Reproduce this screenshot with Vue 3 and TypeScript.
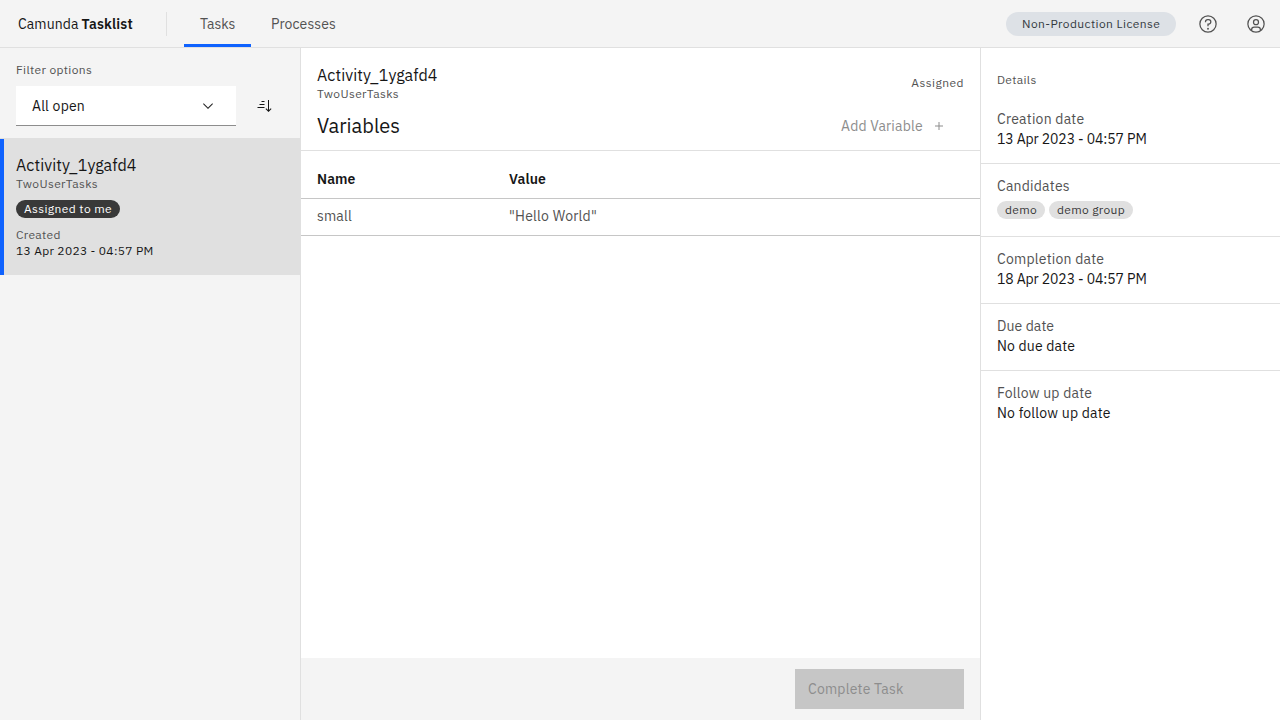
<script setup lang="ts">
interface Detail {
  label: string
  value?: string
  tags?: string[]
  kind: string
}

const details: Detail[] = [
  { label: 'Creation date', value: '13 Apr 2023 - 04:57 PM', kind: 'creation' },
  { label: 'Candidates', tags: ['demo', 'demo group'], kind: 'candidates' },
  { label: 'Completion date', value: '18 Apr 2023 - 04:57 PM', kind: 'completion' },
  { label: 'Due date', value: 'No due date', kind: 'due' },
  { label: 'Follow up date', value: 'No follow up date', kind: 'follow' },
]

const variables = [{ name: 'small', value: '"Hello World"' }]
</script>

<template>
  <div class="app">
    <header class="header">
      <div class="brand"><span>Camunda</span><b>Tasklist</b></div>
      <nav class="nav">
        <a class="nav-item tasks active">Tasks</a>
        <a class="nav-item processes">Processes</a>
      </nav>
      <span class="license">Non-Production License</span>
      <div class="actions">
        <svg class="icon" viewBox="0 0 32 32" width="20" height="20">
          <path d="M16 2a14 14 0 1 0 14 14A14 14 0 0 0 16 2Zm0 26a12 12 0 1 1 12-12A12 12 0 0 1 16 28Z" />
          <circle cx="16" cy="23.5" r="1.5" />
          <path d="M17 8h-1.5A4.49 4.49 0 0 0 11 12.5V13h2v-.5A2.5 2.5 0 0 1 15.5 10H17a2.5 2.5 0 0 1 0 5h-2v4.5h2V17a4.5 4.5 0 0 0 0-9Z" />
        </svg>
        <svg class="icon" viewBox="0 0 32 32" width="20" height="20">
          <path d="M16 8a5 5 0 1 0 5 5 5 5 0 0 0-5-5Zm0 8a3 3 0 1 1 3-3 3 3 0 0 1-3 3Z" />
          <path d="M16 2a14 14 0 1 0 14 14A14.02 14.02 0 0 0 16 2Zm-6 24.38V25a3 3 0 0 1 3-3h6a3 3 0 0 1 3 3v1.38a11.9 11.9 0 0 1-12 0Zm13.99-1.45A5 5 0 0 0 19 20h-6a5 5 0 0 0-4.99 4.93 12 12 0 1 1 15.98 0Z" />
        </svg>
      </div>
    </header>

    <div class="body">
      <aside class="task-panel">
        <section class="filters">
          <label class="filter-label">Filter options</label>
          <div class="filter-row">
            <div class="select">
              <span>All open</span>
              <svg viewBox="0 0 16 16" width="16" height="16"><path d="m8 11-5-5 .7-.7L8 9.6l4.3-4.3.7.7z" /></svg>
            </div>
            <svg class="sort" viewBox="0 0 32 32" width="16" height="16">
              <path d="m27.6 20.6-3.6 3.6V4h-2v20.2l-3.6-3.6L17 22l6 6 6-6zM9 6h6v2H9zM5 12h10v2H5zM1 18h14v2H1z" />
            </svg>
          </div>
        </section>
        <article class="task">
          <div class="title">Activity_1ygafd4</div>
          <div class="process">TwoUserTasks</div>
          <span class="tag dark">Assigned to me</span>
          <div class="created">Created</div>
          <div class="created-date">13 Apr 2023 - 04:57 PM</div>
        </article>
      </aside>

      <main class="main">
        <div class="task-header">
          <div>
            <div class="title">Activity_1ygafd4</div>
            <div class="process">TwoUserTasks</div>
          </div>
          <span class="assigned">Assigned</span>
        </div>
        <div class="variables-header">
          <h1>Variables</h1>
          <div class="add">
            <span>Add Variable</span>
            <svg viewBox="0 0 32 32" width="16" height="16"><path d="M17 15V8h-2v7H8v2h7v7h2v-7h7v-2z" /></svg>
          </div>
        </div>
        <div class="row head"><span class="name">Name</span><span class="value">Value</span></div>
        <div v-for="v in variables" :key="v.name" class="row">
          <span class="name">{{ v.name }}</span><span class="value">{{ v.value }}</span>
        </div>
        <footer class="footer"><button disabled>Complete Task</button></footer>
      </main>

      <aside class="details">
        <div class="details-title">Details</div>
        <section v-for="d in details" :key="d.label" class="detail" :class="d.kind">
          <div class="label">{{ d.label }}</div>
          <div v-if="d.value" class="text">{{ d.value }}</div>
          <div v-else class="tags">
            <span v-for="t in d.tags" :key="t" class="tag">{{ t }}</span>
          </div>
        </section>
      </aside>
    </div>
  </div>
</template>

<style>
body { margin: 0; overflow: hidden; }
</style>

<style scoped>
.app {
  width: 1280px;
  height: 720px;
  display: flex;
  flex-direction: column;
  font-family: "IBM Plex Sans", Roboto, "Liberation Sans", sans-serif;
  font-size: 14px;
  line-height: 20px;
  letter-spacing: 0.16px;
  color: #161616;
  background: #fff;
  white-space: nowrap;
}
.app * { box-sizing: border-box; }
.header {
  height: 48px;
  flex: none;
  display: flex;
  align-items: center;
  background: #f4f4f4;
  border-bottom: 1px solid #e0e0e0;
}
.brand {
  width: 167px;
  height: 24px;
  padding-left: 18px;
  display: flex;
  gap: 3px;
  line-height: 24px;
  border-right: 1px solid #e0e0e0;
  letter-spacing: 0.1px;
}
.brand b { font-weight: 600; letter-spacing: 0.16px; }
.nav { display: flex; height: 47px; padding-left: 17px; gap: 4px; }
.nav-item {
  height: 47px;
  padding: 0 16px;
  line-height: 48px;
  letter-spacing: 0;
  color: #525252;
  border-bottom: 3px solid transparent;
}
.tasks { width: 67px; }
.processes { letter-spacing: 0.1px; }
.active { border-bottom-color: #0f62fe; }
.license {
  width: 170px;
  height: 24px;
  margin-left: auto;
  border-radius: 12px;
  padding-left: 16px;
  background: #dde1e6;
  color: #343a3f;
  font-size: 12px;
  line-height: 24px;
  letter-spacing: 0.41px;
}
.actions { display: flex; gap: 28px; padding: 0 14px 0 22px; }
.icon { display: block; fill: #525252; }
.body { flex: 1; min-height: 0; display: flex; }
.task-panel { width: 301px; flex: none; background: #f4f4f4; border-right: 1px solid #e0e0e0; }
.filters { height: 91px; padding: 14px 16px 0; border-bottom: 1px solid #e0e0e0; }
.filter-label {
  display: block;
  height: 24px;
  font-size: 12px;
  line-height: 16px;
  color: #525252;
  letter-spacing: 0.36px;
}
.filter-row { display: flex; align-items: center; }
.select {
  width: 220px;
  height: 40px;
  padding: 0 20px 0 16px;
  display: flex;
  align-items: center;
  justify-content: space-between;
  background: #fff;
  border-bottom: 1px solid #8d8d8d;
  letter-spacing: 0.2px;
}
.select svg { fill: #262626; }
.sort { margin-left: 20.5px; fill: #161616; }
.task { height: 136px; padding: 16px 12px; background: #e0e0e0; border-left: 4px solid #0f62fe; }
.title { font-size: 16px; line-height: 20px; letter-spacing: 0.08px; }
.process { margin-top: 1px; font-size: 12px; line-height: 16px; color: #525252; letter-spacing: 0.38px; }
.tag {
  display: block;
  height: 18px;
  padding: 0 8px;
  border-radius: 9px;
  background: #e0e0e0;
  color: #393939;
  font-size: 12px;
  line-height: 18px;
  letter-spacing: 0.32px;
}
.dark { width: 104px; margin-top: 8px; background: #393939; color: #fff; letter-spacing: 0.39px; }
.created, .created-date { font-size: 12px; line-height: 16px; letter-spacing: 0.32px; }
.created { margin-top: 9px; color: #525252; }
.main { width: 680px; flex: none; display: flex; flex-direction: column; border-right: 1px solid #e0e0e0; }
.task-header { height: 54px; padding: 17px 16px 0; display: flex; justify-content: space-between; }
.assigned { margin-top: 10px; font-size: 12px; line-height: 16px; color: #525252; letter-spacing: 0.46px; }
.variables-header {
  height: 49px;
  padding: 0 16px;
  display: flex;
  justify-content: space-between;
  border-bottom: 1px solid #e0e0e0;
}
h1 { margin: 10px 0 0; font-size: 20px; line-height: 28px; font-weight: 400; letter-spacing: 0; }
.add {
  width: 123px;
  height: 48px;
  display: flex;
  align-items: center;
  gap: 8px;
  color: #8d8d8d;
}
.add span { width: 82px; }
.add svg { fill: #8d8d8d; }
.row {
  height: 37px;
  display: flex;
  padding: 0 16px;
  line-height: 34px;
  color: #525252;
  border-bottom: 1px solid #c6c6c6;
}
.value { letter-spacing: 0.22px; }
.head { height: 48px; padding-top: 10px; line-height: 36px; font-weight: 600; color: #161616; }
.name { width: 192px; }
.head .name, .head .value { letter-spacing: 0.1px; }
.footer { height: 62px; margin-top: auto; padding: 11px 16px; display: flex; justify-content: flex-end; background: #f4f4f4; }
button {
  width: 169px;
  height: 40px;
  padding: 0 13px;
  border: 0;
  background: #c6c6c6;
  color: #8d8d8d;
  font: inherit;
  text-align: left;
  letter-spacing: 0.2px;
}
.details { flex: 1; background: #fff; }
.details-title {
  height: 45px;
  padding: 24px 16px 0;
  font-size: 12px;
  line-height: 16px;
  color: #525252;
  letter-spacing: 0.32px;
}
.detail { height: 67px; padding: 12px 16px 0; border-bottom: 1px solid #e0e0e0; }
.creation { height: 71px; padding-top: 16px; }
.candidates { height: 73px; }
.follow { border: 0; }
.label { color: #525252; letter-spacing: 0.21px; }
.text { letter-spacing: 0.2px; }
.creation .text, .completion .text { letter-spacing: -0.12px; }
.due .label { letter-spacing: 0.08px; }
.due .text { letter-spacing: 0.16px; }
.tags { display: flex; gap: 4px; padding-top: 5px; }
</style>
